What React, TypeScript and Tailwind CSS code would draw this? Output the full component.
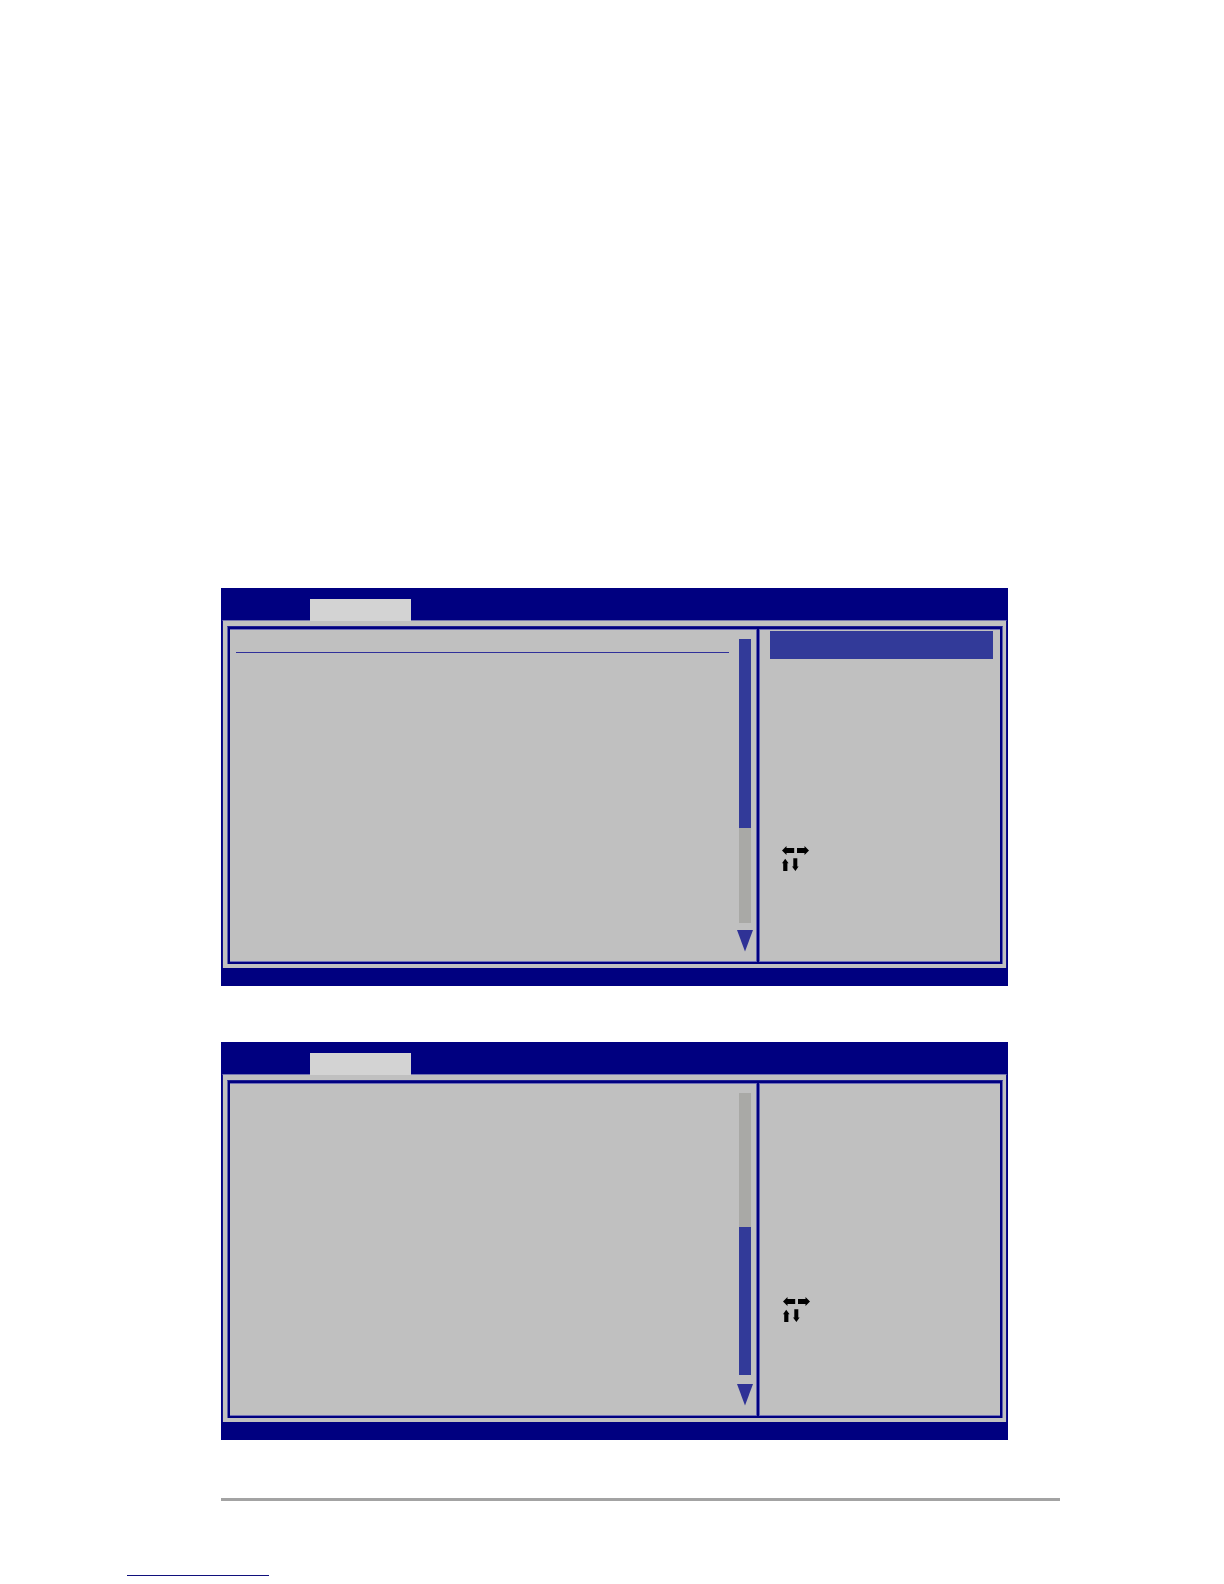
const arrowLeft = "M0 4.5 4.5 0V2H12.2V7H4.5V9Z";
const arrowRight = "M27 4.5 22.5 0V2H15V7H22.5V9Z";
const arrowUp = "M0 17.3 3.2 12.8 6.6 17.3H5.4V25H1.2V17.3Z";
const arrowDown = "M13.4 25 10 20.5H11.3V12.3H15.3V20.5H16.6Z";

const ArrowKeys = () => {
    return (
        <svg width="27" height="25" viewBox="0 0 27 25" aria-hidden="true">
            <path d={arrowLeft} />
            <path d={arrowRight} />
            <path d={arrowUp} />
            <path d={arrowDown} />
        </svg>
    );
};

const DownArrow = () => {
    return (
        <svg width="16" height="22" viewBox="0 0 16 22" aria-hidden="true">
            <path d="M0 0H16L8 21.5Z" fill="#2f3296" />
        </svg>
    );
};

type SetupScreenProps = {
    second?: boolean;
};

const SetupScreen = ({ second = false }: SetupScreenProps) => {
    return (
        <section className="bg-[#000080]">
            <nav className="flex h-8 items-end pl-[89px]">
                <button type="button" aria-label="Menu" className="z-10 -mb-px h-[22px] w-[101px] bg-[#d3d3d3]" />
            </nav>

            <div className="mx-px border-x border-t border-x-[#10108a] border-t-[#7575b0] bg-[#c0c0c0] pt-[5px] pr-[3px] pb-1 pl-1">
                <div className="border-x border-t border-x-[#6060b0] border-t-[#202092]">
                    <div className="flex h-[337px] border-2 border-[#000080]">
                        <div className="flex flex-1 justify-between border-y border-y-[#7070b8] pt-[9px] pr-[3px] pl-[6px]">
                            <div className="flex-1 pt-[13px] pr-2">
                                {!second && <hr className="border-[#30309a]" />}
                            </div>
                            <div className="flex w-4 flex-col items-center">
                                {second ? (
                                    <>
                                        <div className="h-[134px] w-3 bg-[#a9a9a6]" />
                                        <div className="h-[148px] w-3 bg-[#323a99]" />
                                        <div className="h-[9px]" />
                                    </>
                                ) : (
                                    <>
                                        <div className="h-[189px] w-3 bg-[#323a99]" />
                                        <div className="h-[95px] w-3 bg-[#a9a9a6]" />
                                        <div className="h-[7px]" />
                                    </>
                                )}
                                <DownArrow />
                            </div>
                        </div>

                        <div className="w-1 border-x border-[#6060b0] bg-[#000080]" />

                        <aside className="w-60 border-y border-y-[#7070b8] pt-px pr-[7px] pl-[10px]">
                            <div className={second ? "h-7" : "h-7 bg-[#323a99]"} />
                            <div className={second ? "pt-[184px] pl-[13px]" : "pt-[187px] pl-3"}>
                                <ArrowKeys />
                            </div>
                        </aside>
                    </div>
                </div>
            </div>

            <div className="h-[18px]" />
        </section>
    );
};

const App = () => {
    return (
        <div className="bg-white pt-[588px] pb-2 font-['Liberation_Sans',sans-serif]">
            <main className="flex flex-col gap-14 pr-[216px] pl-[221px]">
                <SetupScreen />
                <SetupScreen second />
            </main>

            <footer>
                <hr className="mt-[58px] mr-[164px] ml-[221px] border-t-[3px] border-[#a3a3a3]" />
                <a href="#" aria-label="Home" className="mt-14 ml-[127px] block h-[19px] w-[142px] border-b border-[#10107c]" />
            </footer>
        </div>
    );
};

export default App;
